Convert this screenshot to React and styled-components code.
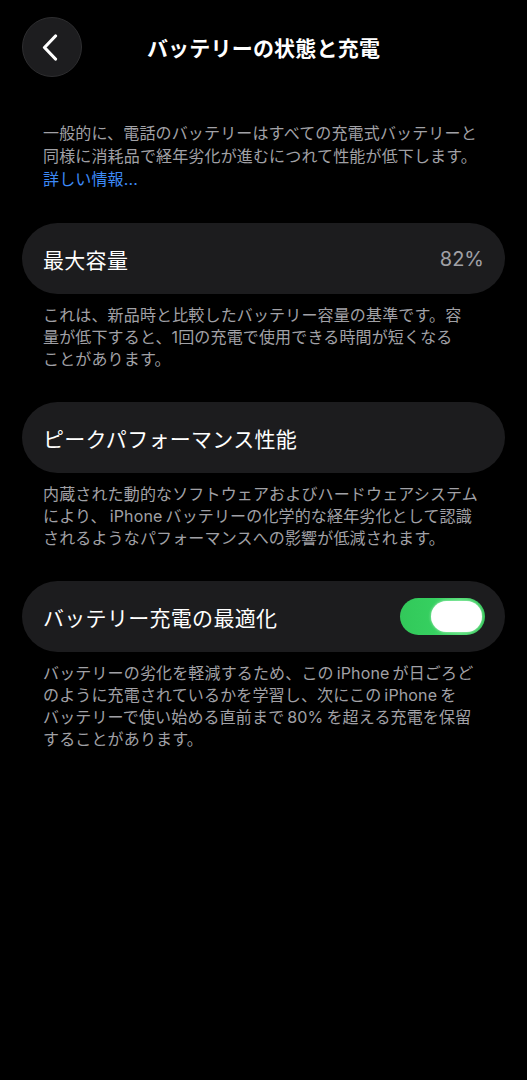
import React, { useState } from "react";
import styled, { createGlobalStyle } from "styled-components";

const Global = createGlobalStyle`
  html, body {
    margin: 0;
    padding: 0;
    background: #000;
  }
  body {
    font-family: "Inter", "Noto Sans CJK JP", sans-serif;
    -webkit-font-smoothing: antialiased;
  }
`;

const Page = styled.div`
  min-height: 1080px;
  background: #000;
  color: #fff;
  padding: 17px 22px 0;
  box-sizing: border-box;
`;

const Header = styled.header`
  position: relative;
  display: flex;
  align-items: center;
  justify-content: center;
  height: 60px;
`;

const BackButton = styled.button`
  position: absolute;
  left: 0;
  top: 0;
  width: 60px;
  height: 60px;
  border-radius: 50%;
  background: #1d1d1f;
  border: 1px solid #2e2e30;
  display: flex;
  align-items: center;
  justify-content: center;
  padding: 0 4px 0 0;
  cursor: pointer;
`;

const Title = styled.h1`
  margin: 0;
  font-size: 21px;
  font-weight: 600;
  letter-spacing: 0.2px;
  color: #fff;
`;

const Note = styled.p`
  margin: ${(p) => p.$top || 0}px 0 0;
  padding: 0 21px;
  font-size: 16px;
  letter-spacing: 0.15px;
  line-height: ${(p) => p.$lh || 22}px;
  color: #a1a1a6;
  white-space: nowrap;
`;

const Latin = styled.span`
  margin: 0 3px;
`;

const Link = styled.a`
  color: #3d8af7;
  text-decoration: none;
`;

const Card = styled.div`
  margin-top: ${(p) => p.$top}px;
  height: 71px;
  border-radius: 36px;
  background: #1c1c1e;
  display: flex;
  align-items: center;
  justify-content: space-between;
  padding: 0 21px;
  box-sizing: border-box;
`;

const Label = styled.span`
  font-size: 21px;
  font-weight: 400;
  letter-spacing: 0.3px;
  color: #fff;
`;

const Value = styled.span`
  font-size: 20px;
  color: #a1a1a6;
`;

const Track = styled.button`
  width: 85px;
  height: 37px;
  border-radius: 19px;
  border: none;
  padding: 3px;
  display: flex;
  justify-content: ${(p) => (p.$on ? "flex-end" : "flex-start")};
  background: ${(p) =>
    p.$on ? "linear-gradient(90deg, #32c85a 0%, #36d060 40%, #56de78 70%, #34c759 100%)" : "#39393d"};
  cursor: pointer;
  margin-right: -1px;
`;

const Knob = styled.span`
  width: 51px;
  height: 31px;
  border-radius: 16px;
  background: #fff;
  box-shadow: 0 0 3px rgba(255, 255, 255, 0.6);
`;

function Chevron() {
  return (
    <svg width="16" height="27" viewBox="0 0 16 27" fill="none">
      <path d="M13.5 2 L2.5 13.5 L13.5 25" stroke="#fff" strokeWidth="3.2" strokeLinecap="round" strokeLinejoin="round" />
    </svg>
  );
}

export default function App() {
  const [optimized, setOptimized] = useState(true);
  return (
    <>
      <Global />
      <Page>
        <Header>
          <BackButton aria-label="戻る">
            <Chevron />
          </BackButton>
          <Title>バッテリーの状態と充電</Title>
        </Header>

        <Note $top={45} $lh={23}>
          一般的に、電話のバッテリーはすべての充電式バッテリーと
          <br />
          同様に消耗品で経年劣化が進むにつれて性能が低下します。
          <br />
          <Link href="#">詳しい情報...</Link>
        </Note>

        <Card $top={32}>
          <Label>最大容量</Label>
          <Value>82%</Value>
        </Card>
        <Note $top={10}>
          これは、新品時と比較したバッテリー容量の基準です。容
          <br />
          量が低下すると、1回の充電で使用できる時間が短くなる
          <br />
          ことがあります。
        </Note>

        <Card $top={32}>
          <Label>ピークパフォーマンス性能</Label>
        </Card>
        <Note $top={10}>
          内蔵された動的なソフトウェアおよびハードウェアシステム
          <br />
          により、<Latin>iPhone</Latin>バッテリーの化学的な経年劣化として認識
          <br />
          されるようなパフォーマンスへの影響が低減されます。
        </Note>

        <Card $top={32}>
          <Label>バッテリー充電の最適化</Label>
          <Track $on={optimized} onClick={() => setOptimized(!optimized)} aria-label="バッテリー充電の最適化">
            <Knob />
          </Track>
        </Card>
        <Note $top={10}>
          バッテリーの劣化を軽減するため、この<Latin>iPhone</Latin>が日ごろど
          <br />
          のように充電されているかを学習し、次にこの<Latin>iPhone</Latin>を
          <br />
          バッテリーで使い始める直前まで<Latin>80%</Latin>を超える充電を保留
          <br />
          することがあります。
        </Note>
      </Page>
    </>
  );
}
